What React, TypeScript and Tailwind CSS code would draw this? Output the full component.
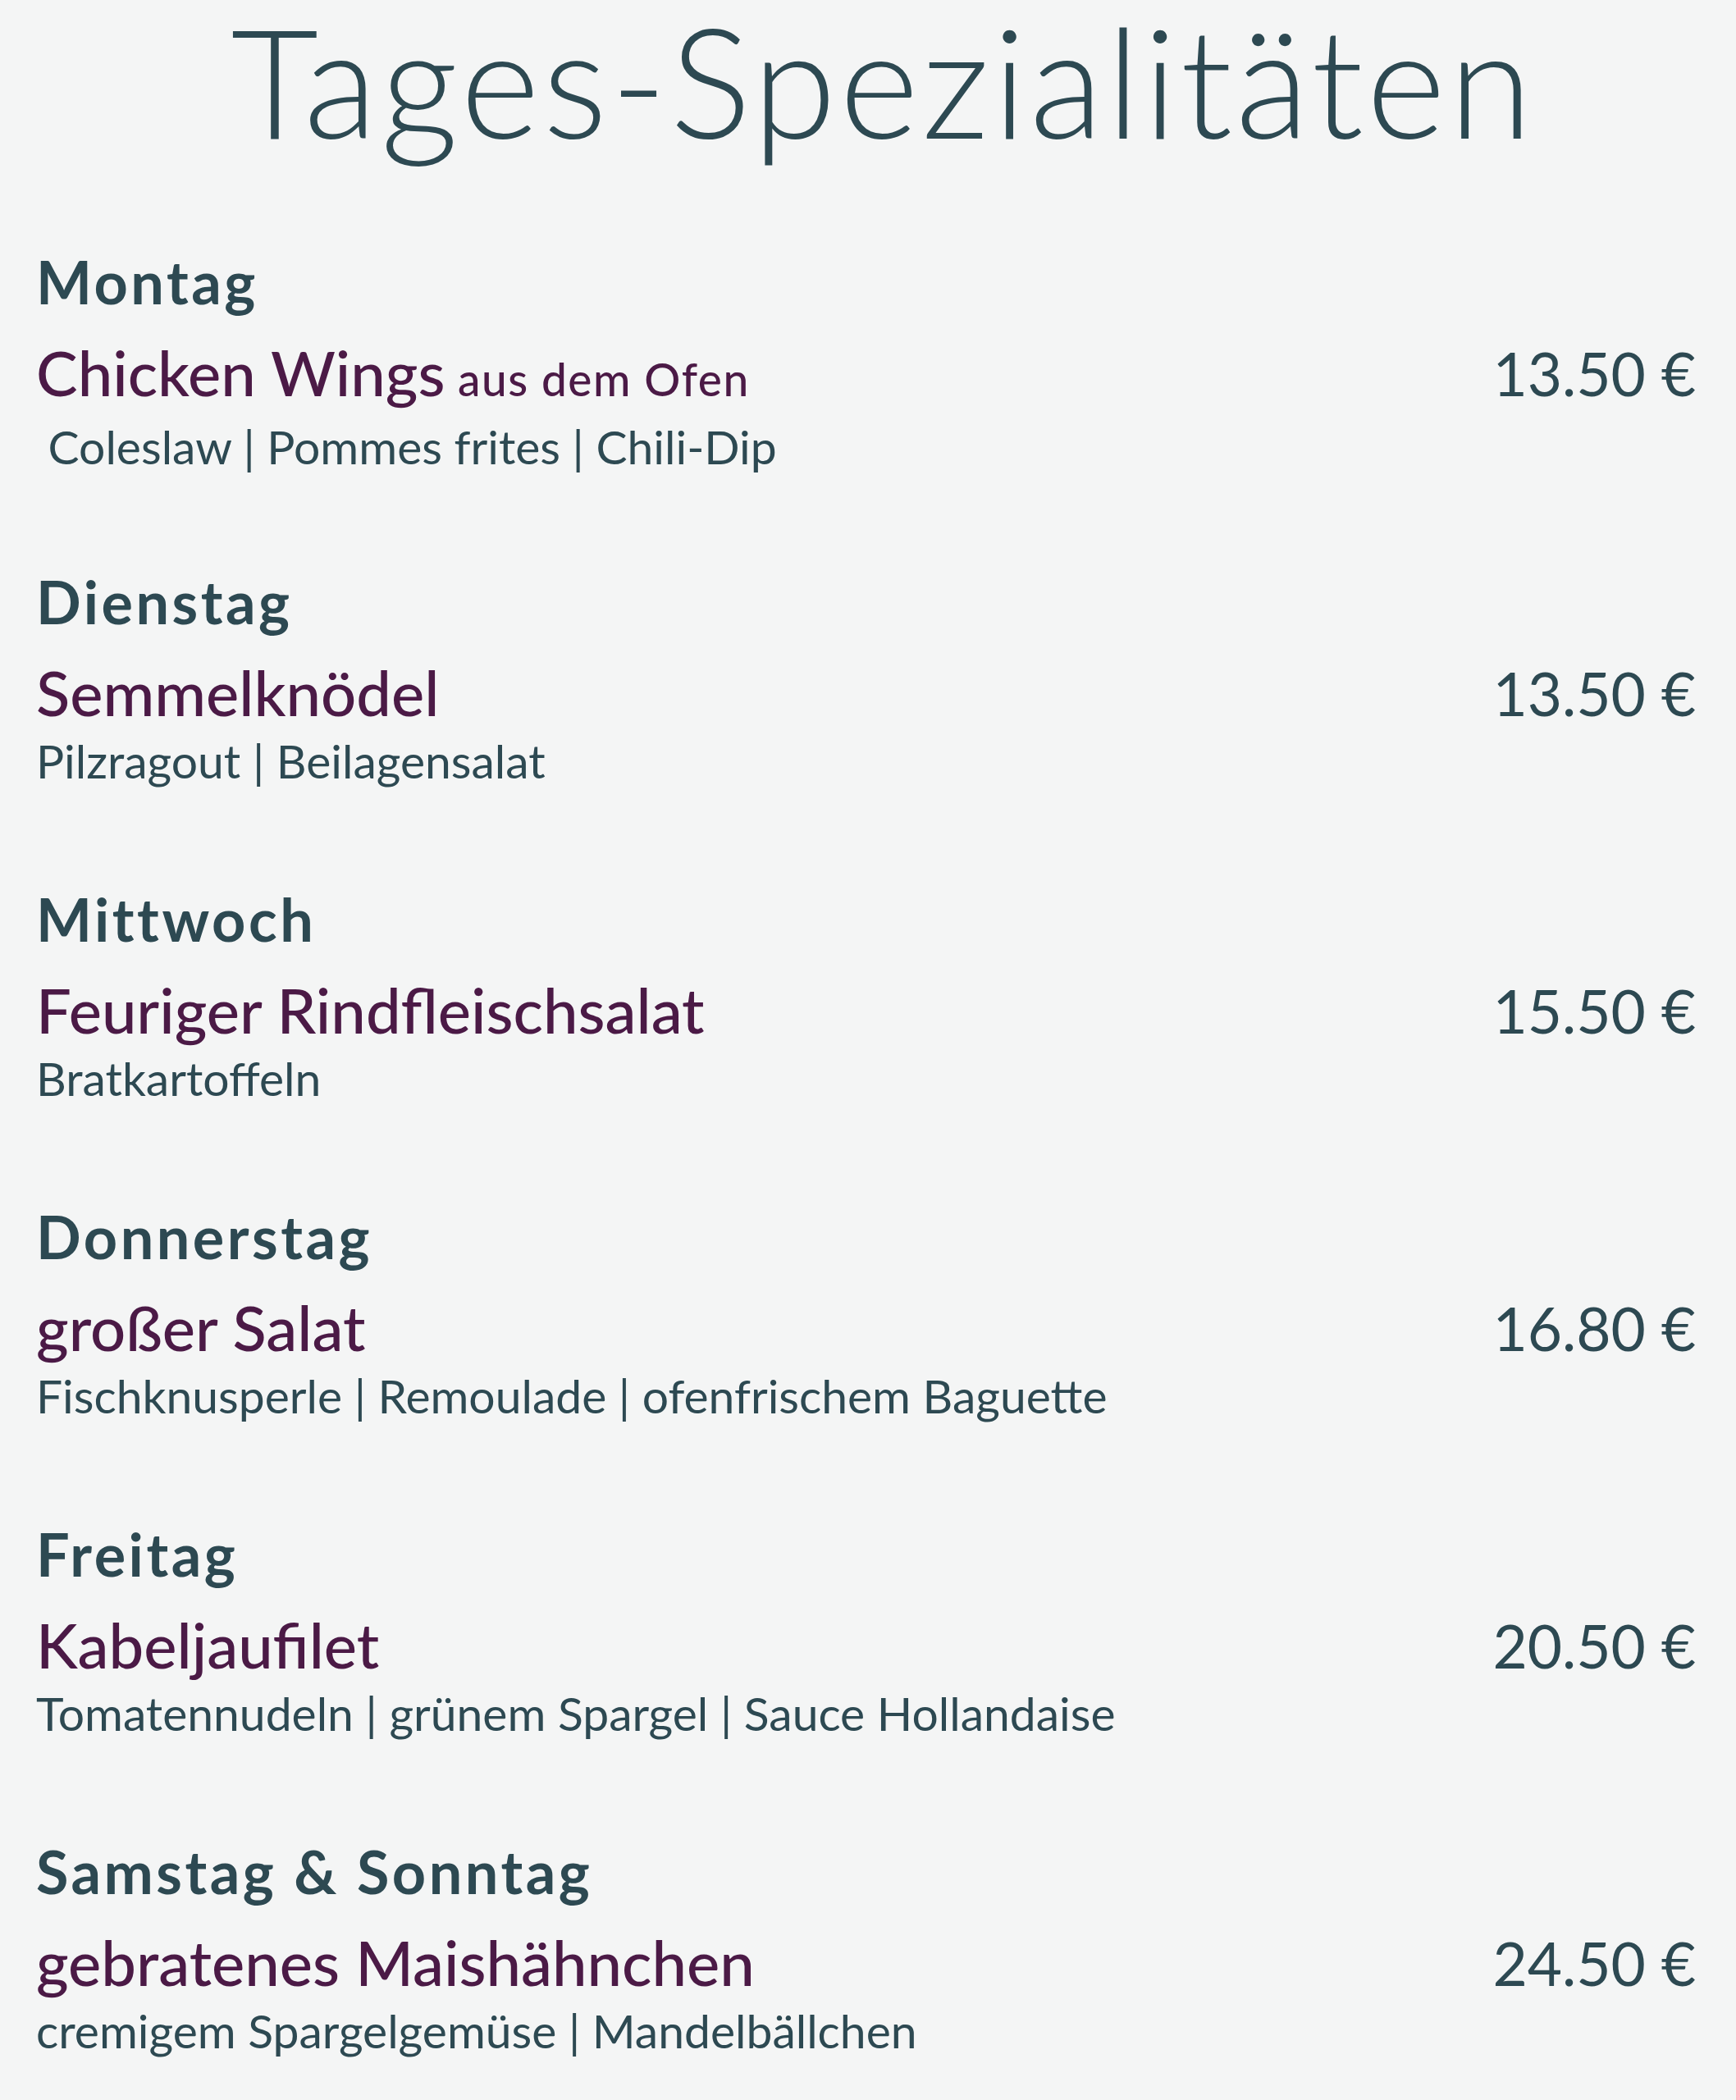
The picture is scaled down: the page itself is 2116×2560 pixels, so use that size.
// Weekly specials board, one section per day.

const DAYS = [
  {
    day: "Montag",
    dish: "Chicken Wings",
    extra: "aus dem Ofen",
    sides: "\u00a0Coleslaw | Pommes frites | Chili-Dip",
    price: "13.50 €",
  },
  {
    day: "Dienstag",
    dish: "Semmelknödel",
    sides: "Pilzragout | Beilagensalat",
    price: "13.50 €",
  },
  {
    day: "Mittwoch",
    dish: "Feuriger Rindfleischsalat",
    sides: "Bratkartoffeln",
    price: "15.50 €",
  },
  {
    day: "Donnerstag",
    dish: "großer Salat",
    sides: "Fischknusperle | Remoulade | ofenfrischem Baguette",
    price: "16.80 €",
  },
  {
    day: "Freitag",
    dish: "Kabeljaufilet",
    sides: "Tomatennudeln | grünem Spargel | Sauce Hollandaise",
    price: "20.50 €",
  },
  {
    day: "Samstag & Sonntag",
    dish: "gebratenes Maishähnchen",
    sides: "cremigem Spargelgemüse | Mandelbällchen",
    price: "24.50 €",
  },
];

type Special = (typeof DAYS)[number] & { extra?: string };

function DaySection({ s }: { s: Special }) {
  return (
    <section className="pb-[113px] first:pb-[109px] last:pb-0">
      <h2 className="text-[72px] leading-[90px] font-bold tracking-[3.5px] text-[#2d4952]">
        {s.day}
      </h2>
      <div className="mt-[16px] flex items-baseline justify-between">
        <div className="text-[76px] leading-[100px] font-medium text-[#4b1a46]">
          {s.dish}
          {s.extra && <span className="text-[55px] tracking-[1.5px]"> {s.extra}</span>}
        </div>
        <div className="text-[73px] leading-[100px] font-normal text-[#2d4952]">{s.price}</div>
      </div>
      <p className="-mt-[3px] text-[57px] leading-[70px] font-normal text-[#2d4952]">{s.sides}</p>
    </section>
  );
}

export default function App() {
  return (
    <div className="min-h-screen bg-[#f4f5f5] pl-[44px] pr-[49px] pt-[4px] font-['Lato',sans-serif]">
      <h1 className="-mt-[18px] pl-[42px] text-center text-[185px] leading-[222px] font-light tracking-[4px] text-[#2d4952]">
        Tages-Spezialitäten
      </h1>
      <div className="mt-[90px]">
        {DAYS.map((s) => (
          <DaySection key={s.day} s={s} />
        ))}
      </div>
    </div>
  );
}
